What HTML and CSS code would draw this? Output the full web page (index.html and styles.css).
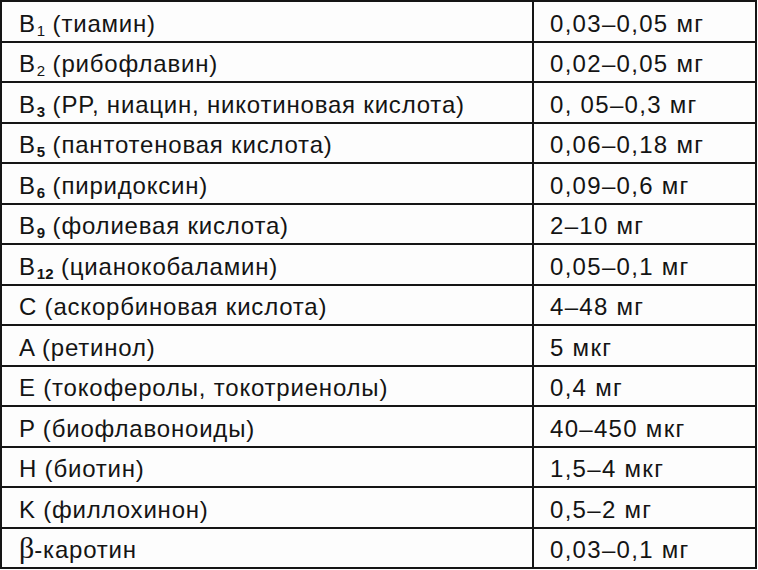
FILE: index.html
```html
<!DOCTYPE html>
<html lang="ru">
<head>
<meta charset="utf-8">
<link rel="stylesheet" href="styles.css">
</head>
<body>
<table class="vit">
  <tr><td class="name">B<sub class="thin">1</sub> (тиамин)</td><td class="dose">0,03–0,05 мг</td></tr>
  <tr><td class="name">B<sub>2</sub> (рибофлавин)</td><td class="dose">0,02–0,05 мг</td></tr>
  <tr><td class="name">B<sub class="bold">3</sub> (PP, ниацин, никотиновая кислота)</td><td class="dose">0, 05–0,3 мг</td></tr>
  <tr><td class="name">B<sub class="bold">5</sub> (пантотеновая кислота)</td><td class="dose">0,06–0,18 мг</td></tr>
  <tr><td class="name">B<sub class="bold">6</sub> (пиридоксин)</td><td class="dose">0,09–0,6 мг</td></tr>
  <tr><td class="name">B<sub class="bold">9</sub> (фолиевая кислота)</td><td class="dose">2–10 мг</td></tr>
  <tr><td class="name">B<sub class="bold">12</sub> (цианокобаламин)</td><td class="dose">0,05–0,1 мг</td></tr>
  <tr><td class="name">C (аскорбиновая кислота)</td><td class="dose">4–48 мг</td></tr>
  <tr><td class="name">A (ретинол)</td><td class="dose">5 мкг</td></tr>
  <tr><td class="name">E (токоферолы, токотриенолы)</td><td class="dose">0,4 мг</td></tr>
  <tr><td class="name">P (биофлавоноиды)</td><td class="dose">40–450 мкг</td></tr>
  <tr><td class="name">H (биотин)</td><td class="dose">1,5–4 мкг</td></tr>
  <tr><td class="name">K (филлохинон)</td><td class="dose">0,5–2 мг</td></tr>
  <tr><td class="name"><span class="beta">β</span>-каротин</td><td class="dose">0,03–0,1 мг</td></tr>
</table>
</body>
</html>
```
FILE: styles.css
```css
html, body {
  margin: 0;
  padding: 0;
  background: #fdfdfd;
}
.vit {
  border-collapse: collapse;
  width: 757px;
  height: 569px;
  font-family: "Liberation Sans", Arial, sans-serif;
  font-size: 24px;
  color: #141414;
  letter-spacing: 0.8px;
  table-layout: fixed;
}
.vit td {
  border: 2px solid #151515;
  height: 30px;
  padding: 5px 0 0 0;
  vertical-align: middle;
  white-space: nowrap;
  line-height: 24px;
}
.vit td.name {
  width: 513px;
  padding-left: 17px;
}
.vit td.dose {
  padding-left: 16px;
  letter-spacing: 1.3px;
}
.vit sub {
  font-size: 15px;
  line-height: 0;
  vertical-align: -4px;
  letter-spacing: 0;
  margin-left: 1px;
}
.vit sub.bold {
  font-weight: bold;
}
.beta {
  font-family: "Liberation Serif", serif;
  font-size: 30px;
  line-height: 0;
  letter-spacing: 0;
}
```
